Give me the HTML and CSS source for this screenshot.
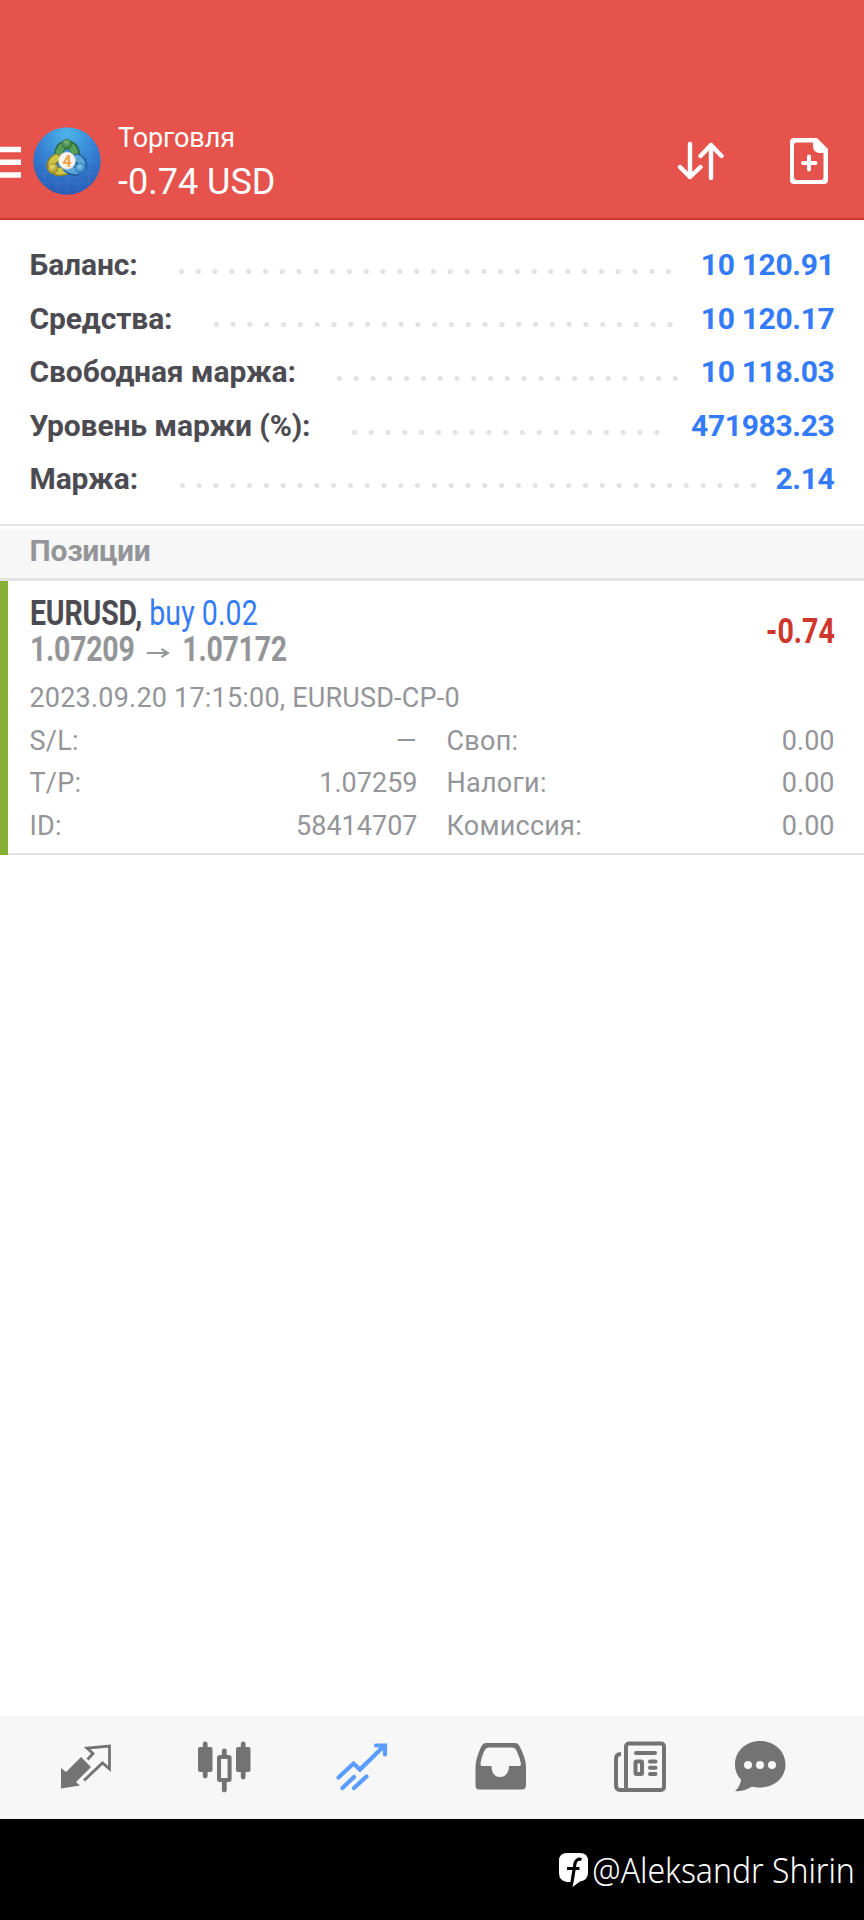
FILE: index.html
```html
<!DOCTYPE html>
<html lang="ru">
<head>
<meta charset="utf-8">
<title>Торговля</title>
<link rel="stylesheet" href="styles.css">
</head>
<body>
<header class="header">
  <svg class="menu" width="22" height="34" viewBox="0 0 22 34"><path d="M0 3.500H21M0 16.200H21M0 29H21" stroke="#fff" stroke-width="5.600"/></svg>
  <svg class="logo" width="68" height="68" viewBox="0 0 68 68">
    <defs>
      <radialGradient id="sky" cx=".5" cy=".1" r=".9"><stop offset="0" stop-color="#4db4e8"/><stop offset=".5" stop-color="#3481d4"/><stop offset="1" stop-color="#2a5cb5"/></radialGradient>
      <radialGradient id="green" cx=".4" cy=".3" r=".7"><stop offset="0" stop-color="#7cb878"/><stop offset="1" stop-color="#2c7938"/></radialGradient>
      <radialGradient id="gold" cx=".4" cy=".3" r=".7"><stop offset="0" stop-color="#e8de70"/><stop offset="1" stop-color="#a08f22"/></radialGradient>
      <radialGradient id="blue" cx=".4" cy=".3" r=".7"><stop offset="0" stop-color="#8accf2"/><stop offset="1" stop-color="#2475b8"/></radialGradient>
    </defs>
    <circle cx="34" cy="34" r="33.700" fill="url(#sky)"/>
    <path d="M12 10V58M23 4V64M34 1V67M45 4V64M56 10V58M3 22H65M1 34H67M3 46H65M10 56H58" stroke="#7cc4f5" stroke-width=".6" opacity=".22"/>
    <g fill="none" stroke-linecap="round">
      <path d="M27 33C24 25 27 18 34 18C41 18 45 26 41 33" stroke="#2c6a45" stroke-width="9"/>
      <path d="M27 32C24 25 28 18 34 18C40 18 44 26 41 32" stroke="#5c9f58" stroke-width="6.500"/>
      <path d="M24 31C17 34 16 41 21 43C25 46 32 45 36 42" stroke="#8a8428" stroke-width="9"/>
      <path d="M23 31C18 34 17 40 21 43C25 45 32 45 36 42" stroke="#cfc648" stroke-width="6.500"/>
      <path d="M44 31C51 34 51 40 47 43C43 46 37 44 34 41" stroke="#25619f" stroke-width="9"/>
      <path d="M44 31C50 34 50 40 47 43C42 45 37 43 34 41" stroke="#5ba7dc" stroke-width="6.500"/>
    </g>
    <circle cx="34" cy="17" r="4.800" fill="url(#green)" stroke="#286839" stroke-width=".7"/>
    <circle cx="20" cy="41.500" r="5" fill="url(#gold)" stroke="#8b8021" stroke-width=".7"/>
    <circle cx="47.500" cy="41.500" r="5" fill="url(#blue)" stroke="#276baa" stroke-width=".7"/>
    <circle cx="34" cy="33.700" r="8.500" fill="#f5f4f1" stroke="#d7d7d3" stroke-width=".7"/>
    <text class="logo-digit" x="34" y="39.500" text-anchor="middle">4</text>
  </svg>
  <div class="heading"><div class="title">Торговля</div><div class="profit">-0.74 USD</div></div>
  <div class="actions">
    <svg width="48" height="40" viewBox="0 0 48 40" fill="none" stroke="#fff" stroke-width="4.400" stroke-linecap="round" stroke-linejoin="round"><path d="M13 3V36M3 26L13 36L23.500 26M34 37V4M23.500 15L34 4L44.500 15"/></svg>
    <svg width="40" height="48" viewBox="0 0 40 48"><path d="M5 1H28L39 12V43Q39 47 35 47H5Q1 47 1 43V5Q1 1 5 1ZM7.500 5.500Q5 5.500 5 8V40Q5 43 8 43H31.500Q34.500 43 34.500 40V16H30Q24 15 24 9V5.500Z" fill="#fff" fill-rule="evenodd"/><path d="M20 19.500V32.500M14 26H26.500" stroke="#fff" stroke-width="4" stroke-linecap="round"/></svg>
  </div>
</header>
<main class="content">
  <section class="account">
    <div class="row"><span class="name">Баланс:</span><i class="dots" style="width:504px"></i><span class="value">10 120.91</span></div>
    <div class="row"><span class="name">Средства:</span><i class="dots" style="width:470px"></i><span class="value">10 120.17</span></div>
    <div class="row"><span class="name">Свободная маржа:</span><i class="dots" style="width:353px"></i><span class="value">10 118.03</span></div>
    <div class="row"><span class="name">Уровень маржи (%):</span><i class="dots" style="width:319px"></i><span class="value">471983.23</span></div>
    <div class="row"><span class="name">Маржа:</span><i class="dots" style="width:588px"></i><span class="value">2.14</span></div>
  </section>
  <h2 class="section-title">Позиции</h2>
  <article class="position">
    <div class="summary">
      <div class="deal">
        <div class="symbol"><b>EURUSD,</b> <span class="side">buy 0.02</span></div>
        <div class="prices"><span>1.07209</span><svg width="28" height="12" viewBox="0 0 28 12" fill="none" stroke="#949599" stroke-width="2.200"><path d="M0 6H26M18 2L26 6L18 10"/></svg><span>1.07172</span></div>
      </div>
      <div class="loss">-0.74</div>
    </div>
    <div class="opened">2023.09.20 17:15:00, EURUSD-CP-0</div>
    <dl class="details">
      <dt>S/L:</dt><dd class="dash">–</dd><dt>Своп:</dt><dd>0.00</dd>
      <dt>T/P:</dt><dd>1.07259</dd><dt>Налоги:</dt><dd>0.00</dd>
      <dt>ID:</dt><dd>58414707</dd><dt>Комиссия:</dt><dd>0.00</dd>
    </dl>
  </article>
</main>
<nav class="nav">
  <svg width="54" height="54" viewBox="0 0 54 54"><path d="M1 26L6 30L21 15L31 25L16 40L20 43.500L1 46.500Z" fill="#737373"/><path d="M27.500 17.500L33 11.500L27 6L49.500 4V27L42.500 21L24 38.500" fill="none" stroke="#737373" stroke-width="2.800"/></svg>
  <svg width="54" height="54" viewBox="0 0 54 54" fill="#737373"><rect x="1" y="5" width="14.500" height="25" rx="2"/><rect x="39" y="5" width="14.500" height="25" rx="2"/><path d="M8.200 2V34M46.200 2V35M27.300 9V14M27.300 40V48" stroke="#737373" stroke-width="4.800" stroke-linecap="round"/><rect x="22" y="15" width="10.600" height="23" rx="1" fill="none" stroke="#737373" stroke-width="4"/></svg>
  <svg width="54" height="54" viewBox="0 0 54 54" fill="none" stroke="#5a9cff" stroke-width="4.200" stroke-linecap="round"><path d="M3.500 35.500L18.500 21.500L25 27.500L49 4M41 3.500H50V12.500M7.500 46L19 35M19 46L31.500 34.500"/></svg>
  <svg width="54" height="54" viewBox="0 0 54 54"><path d="M12 1H41Q44 1 46 5Q52 17 52 25V43Q52 47.500 48 47.500H5Q1.500 47.500 1.500 43V25Q1.500 17 7 5Q9 1 12 1ZM15 5.500Q12 5.500 10.500 8.500Q7 16 6.500 22Q6.500 24 8 24H17.500C17.500 30 20 35 26 35C32 35 35 30 35 24H45.500Q47 24 47 22Q46 16 42.500 8.500Q41 5.500 38 5.500Z" fill="#737373" fill-rule="evenodd"/></svg>
  <svg width="54" height="54" viewBox="0 0 54 54" fill="none" stroke="#737373" stroke-width="4"><rect x="14" y="1.500" width="38" height="46.500" rx="3"/><path d="M9 12Q4 12 4 17V43Q4 48 8 48H18"/><path d="M24 11H43M38 19.500H43.500M38 25.700H43.500M38 32H43.500" stroke-linecap="round"/><rect x="23.500" y="19.500" width="6.500" height="12.500" rx="1"/></svg>
  <svg width="54" height="54" viewBox="0 0 54 54"><path d="M27 -1C41 -1 52.500 9 52.500 22.500C52.500 36 41 45.500 27 45.500C24 45.500 21 45.300 19 44.500C13 48 8 49.500 2 49.300C6 45 8 41 8 37.500C4 34 2 28 2 22.500C2 9 13 -1 27 -1Z" fill="#737373"/><g fill="#f7f7f7"><circle cx="15" cy="23" r="4"/><circle cx="27" cy="23" r="4"/><circle cx="39" cy="23" r="4"/></g></svg>
</nav>
<footer class="footer">
  <svg width="30" height="34" viewBox="0 0 30 34"><path d="M8 0H21Q29 0 29 8V20Q29 27 21 28.500L13.500 34L14.500 29H8Q0 28 0 20V8Q0 0 8 0Z" fill="#fff"/><path d="M22.500 6.500Q17.500 5 16 10.500L13 29M8 15.500H20.500" fill="none" stroke="#000" stroke-width="3.200"/></svg>
  <span class="author">@Aleksandr Shirin</span>
</footer>
</body>
</html>
```
FILE: styles.css
```css
* { box-sizing: border-box; }
body {
  margin: 0;
  width: 864px;
  height: 1920px;
  display: flex;
  flex-direction: column;
  background: #fff;
  color: #4c4b52;
  font-family: Roboto, sans-serif;
  overflow: hidden;
}
svg { display: block; flex: none; }
.header {
  height: 220px;
  padding-top: 120px;
  display: flex;
  align-items: flex-start;
  background: #e6534c;
  border-bottom: 2px solid #c9392e;
  color: #fff;
}
.menu { margin-top: 26px; }
.logo { margin: 7px 0 0 11px; }
.logo-digit { font: bold 16px Roboto, sans-serif; fill: #eda244; }
.heading { margin-left: 17px; padding-top: 1px; white-space: nowrap; }
.title { font-size: 27px; line-height: 34px; letter-spacing: -.1px; }
.profit { font-size: 36px; line-height: 44px; margin-top: 5px; }
.actions { display: flex; gap: 64px; margin: 17px 35px 0 auto; }
.actions svg:first-child { margin-top: 4px; }
.content { flex: 1; }
.account { height: 304px; padding: 18px 29.500px 0; }
.row { height: 53.6px; display: flex; align-items: center; font-size: 30px; font-weight: 700; line-height: 53.6px; white-space: nowrap; }
.name { letter-spacing: -.12px; }
.dots {
  height: 5px;
  margin: 13px 0 0 35.5px;
  flex: none;
  background: radial-gradient(circle, #e3e3e4 2.2px, transparent 3px) 0 0 / 16.8px 5px;
}
.value { margin-left: auto; color: #347bfa; letter-spacing: -.33px; }
.section-title {
  height: 57px;
  margin: 0;
  padding-left: 29.500px;
  border-top: 2px solid #e3e3e3;
  border-bottom: 3px solid #e3e3e3;
  background: linear-gradient(#fff 3px, #f7f7f7 3px);
  color: #949599;
  font-size: 30px;
  line-height: 49px;
  letter-spacing: -.25px;
}
.position {
  height: 274px;
  padding: 14px 29.500px 0 21.500px;
  border-left: 8px solid #88af35;
  box-shadow: inset 0 -2px #e3e3e3;
  color: #949599;
}
.summary { display: flex; justify-content: space-between; }
.deal { white-space: nowrap; font-size: 34.5px; line-height: 36px; transform: scaleX(.826); transform-origin: left; }
.symbol b { color: #4c4b52; letter-spacing: -.2px; }
.side { color: #347bfa; letter-spacing: .1px; }
.prices { display: flex; align-items: center; font-weight: 700; gap: 15px; letter-spacing: -.33px; }
.prices svg { margin-top: 8px; }
.loss { color: #cf362c; font-size: 34.5px; font-weight: 700; line-height: 72px; transform: scaleX(.83); transform-origin: right; }
.opened { font-size: 27px; line-height: 42.5px; margin-top: 10px; letter-spacing: .2px; }
.details {
  margin: 0;
  display: grid;
  grid-template-columns: 110px 278px 150px 1fr;
  font-size: 27px;
  line-height: 42.5px;
}
.details dd { margin: 0; text-align: right; }
.details dt { letter-spacing: .25px; }
.details dt:nth-of-type(even) { padding-left: 29px; white-space: nowrap; }
.details .dash { transform: scaleX(1.3); transform-origin: right; }
.nav {
  height: 103px;
  padding: 26px 0 0 60px;
  display: flex;
  gap: 84.5px;
  background: #f7f7f7;
}
.nav svg { overflow: visible; }
.nav svg:nth-child(2) { margin-left: -1.8px; }
.nav svg:last-child { margin-left: -17.5px; }
.footer {
  height: 101px;
  padding: 0 9px 0 0;
  display: flex;
  align-items: center;
  justify-content: flex-end;
  background: #000;
  color: #fff;
}
.author {
  margin-left: -18px;
  font: 300 34.5px/44px "Noto Sans", sans-serif;
  white-space: nowrap;
  transform: scaleX(.925);
  transform-origin: right;
}
```
